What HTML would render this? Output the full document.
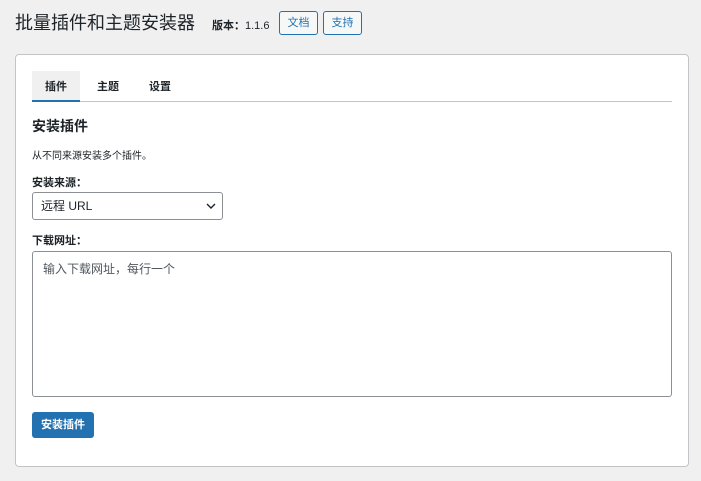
<!DOCTYPE html>
<html><head><meta charset="utf-8"><style>
*{box-sizing:border-box;margin:0;padding:0}
body{width:701px;height:481px;background:#f0f0f1;font-family:"Liberation Sans","Noto Sans CJK SC",sans-serif;color:#1d2327;position:relative;overflow:hidden}
.abs{position:absolute}
h1{position:absolute;left:15px;top:9px;font-size:18px;font-weight:400;line-height:26px;white-space:nowrap;font-family:"Noto Sans CJK SC",sans-serif}
.ver{left:212px;top:17px;font-size:11px}
.btn{position:absolute;top:11px;height:24px;border:1px solid #2271b1;border-radius:3px;background:#f6f7f7;color:#2271b1;font-size:11px;line-height:22px;text-align:center}
.card{left:15px;top:54px;width:674px;height:413px;background:#fff;border:1px solid #c3c4c7;border-radius:4px}
.tabs{left:32px;top:71px;width:640px;height:31px;border-bottom:1px solid #c3c4c7}
.tab{position:absolute;top:0;height:30px;line-height:32px;font-size:11px;font-weight:700;text-align:center}
.sel{left:32px;top:192px;width:191px;height:28px;border:1px solid #8c8f94;border-radius:3px;font-size:12px;line-height:26px;padding-left:8px}
.ta{left:32px;top:251px;width:640px;height:146px;border:1px solid #8c8f94;border-radius:3px;font-size:12px;color:#50575e;padding:8px 10px}
.ib{left:32px;top:412px;width:62px;height:26px;background:#2271b1;color:#fff;border-radius:3px;font-size:11px;font-weight:700;line-height:26px;text-align:center}
</style></head><body>
<h1>批量插件和主题安装器</h1>
<div class="abs ver"><b>版本：</b>1.1.6</div>
<div class="btn" style="left:279px;width:39px">文档</div>
<div class="btn" style="left:323px;width:39px">支持</div>
<div class="abs card"></div>
<div class="abs tabs">
<div class="tab" style="left:0;width:48px;background:#f0f0f1;border-bottom:2px solid #2271b1;height:31px">插件</div>
<div class="tab" style="left:56px;width:40px">主题</div>
<div class="tab" style="left:108px;width:40px">设置</div>
</div>
<div class="abs" style="left:32px;top:116px;font-size:14px;font-weight:700">安装插件</div>
<div class="abs" style="left:32px;top:147px;font-size:10px">从不同来源安装多个插件。</div>
<div class="abs" style="left:32px;top:174px;font-size:11px;font-weight:700">安装来源：</div>
<div class="abs sel">远程 URL<svg style="position:absolute;right:6px;top:9px" width="10" height="8" viewBox="0 0 10 8"><path d="M1 2l4 4 4-4" fill="none" stroke="#1d2327" stroke-width="1.4"/></svg></div>
<div class="abs" style="left:32px;top:232px;font-size:11px;font-weight:700">下载网址：</div>
<div class="abs ta">输入下载网址，每行一个</div>
<div class="abs ib">安装插件</div>
</body></html>
